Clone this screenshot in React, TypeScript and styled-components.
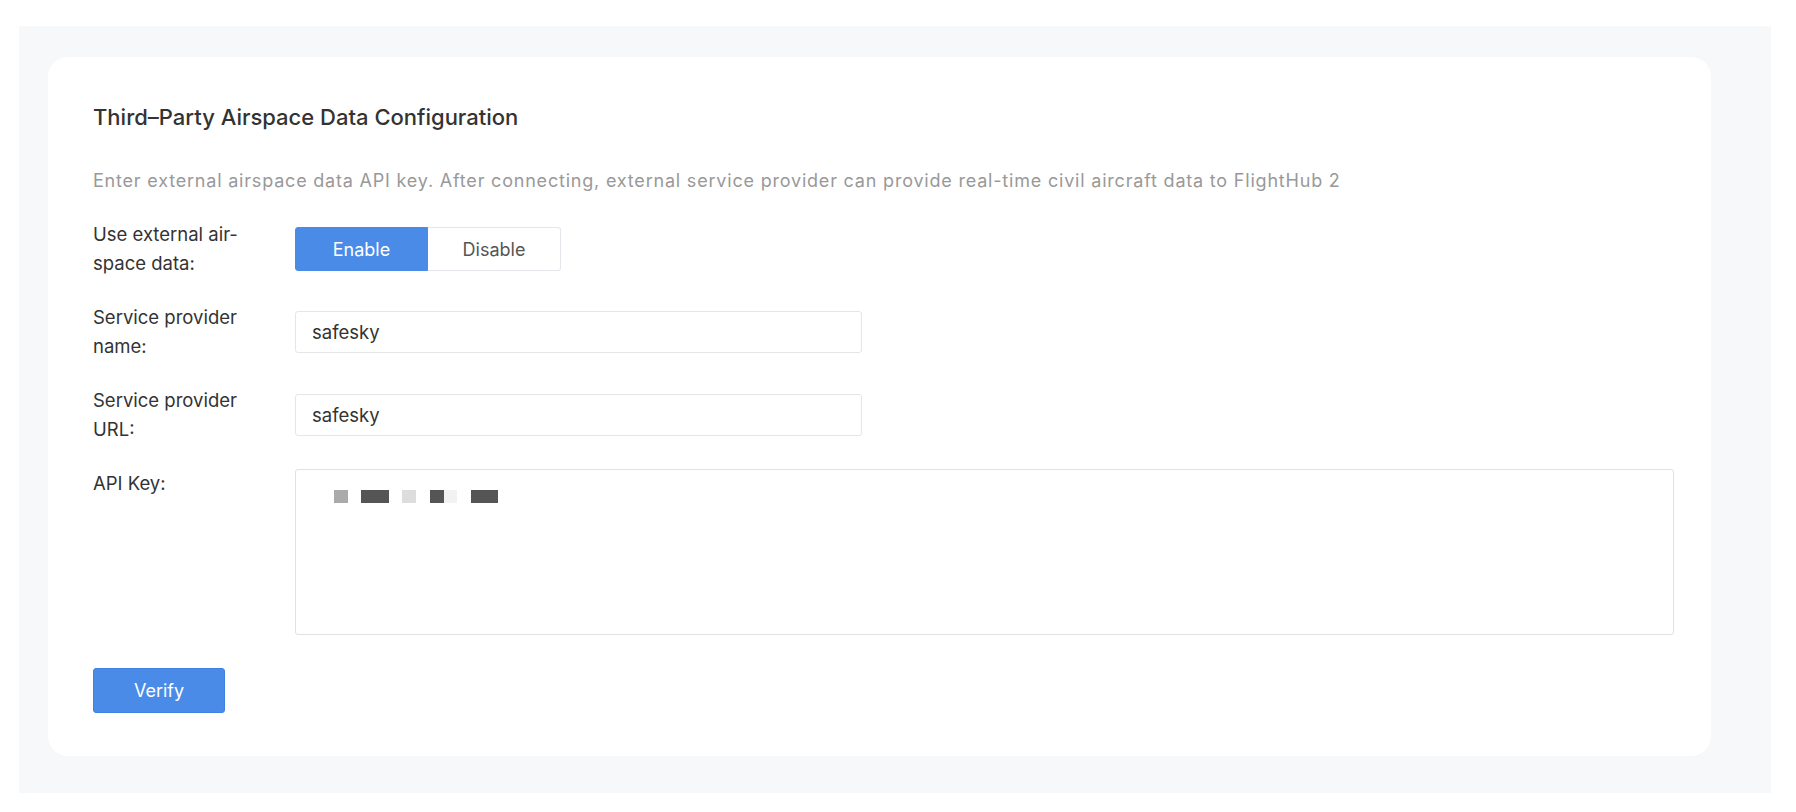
import * as React from 'react';
import styled, { createGlobalStyle } from 'styled-components';

const GlobalStyle = createGlobalStyle`
  html, body {
    margin: 0;
    padding: 0;
    background: #ffffff;
  }
  body {
    font-family: Inter, 'Liberation Sans', 'Noto Sans CJK SC', sans-serif;
    color: #333333;
  }
  * {
    box-sizing: border-box;
  }
`

// mosaic cells that hide the api key in the reference
const keyCells: (string | null)[] = [
  '#aaaaaa', null, '#555555', '#555555', null, '#dddddd', null,
  '#555555', '#f2f2f2', null, '#555555', '#555555',
];

export default function App() {
  const [enabled, setEnabled] = React.useState(true);
  const [name, setName] = React.useState('safesky');
  const [url, setUrl] = React.useState('safesky');

  return (
    <>
      <GlobalStyle />
      <Page>
        <Panel>
          <Card>
            <Title>Third–Party Airspace Data Configuration</Title>
            <Description>
              Enter external airspace data API key. After connecting, external service provider can provide real-time civil aircraft data to FlightHub 2
            </Description>
            <Form>
              <Row>
                <Label>Use external air-<br />space data:</Label>
                <Segmented>
                  <SegButton active={enabled} onClick={() => setEnabled(true)}>Enable</SegButton>
                  <SegButton active={!enabled} onClick={() => setEnabled(false)}>Disable</SegButton>
                </Segmented>
              </Row>
              <Row>
                <Label>Service provider<br />name:</Label>
                <TextInput value={name} onChange={(e) => setName(e.target.value)} />
              </Row>
              <Row>
                <Label>Service provider<br />URL:</Label>
                <TextInput value={url} onChange={(e) => setUrl(e.target.value)} />
              </Row>
              <Row top>
                <Label>API Key:</Label>
                <KeyArea>
                  <Mosaic>
                    {keyCells.map((c, i) => (
                      <Cell key={'cell' + i} tone={c} />
                    ))}
                  </Mosaic>
                </KeyArea>
              </Row>
            </Form>
            <VerifyButton>Verify</VerifyButton>
          </Card>
        </Panel>
      </Page>
    </>
  )
}

const Page = styled.div`
  padding: 26px 25px 20px 19px;
`
const Panel = styled.div`
  background-color: #f7f8fa;
  padding: 31px 60px 37px 29px;
`
const Card = styled.div`
  background-color: #ffffff;
  border-radius: 20px;
  padding: 45px 37px 43px 45px;
  display: flex;
  flex-direction: column;
  align-items: flex-start;
`
const Title = styled.h2`
  margin: 0;
  font-size: 22px;
  line-height: 30px;
  font-weight: 500;
  color: #333333;
`
const Description = styled.p`
  margin: 35px 0 0;
  font-size: 18px;
  line-height: 28px;
  letter-spacing: 0.8px;
  color: #999999;
`
const Form = styled.div`
  width: 100%;
  margin-top: 25px;
  display: flex;
  flex-direction: column;
  gap: 25px;
`
const Row = styled.div<{ top?: boolean }>`
  display: flex;
  align-items: ${(props) => (props.top ? 'flex-start' : 'center')};
`
const Label = styled.div`
  width: 202px;
  flex-shrink: 0;
  font-size: 18.5px;
  line-height: 29px;
  color: #333333;
`
const Segmented = styled.div`
  display: flex;
  height: 44px;
`
const SegButton = styled.button<{ active: boolean }>`
  width: 133px;
  height: 44px;
  font-family: inherit;
  font-size: 18px;
  cursor: pointer;
  border: 1px solid ${(props) => (props.active ? '#4a8be8' : '#e5e6eb')};
  background-color: ${(props) => (props.active ? '#4a8be8' : '#ffffff')};
  color: ${(props) => (props.active ? '#ffffff' : '#555555')};
  &:first-child {
    border-radius: 3px 0 0 3px;
  }
  &:last-child {
    border-radius: 0 3px 3px 0;
    border-left: none;
  }
`
const TextInput = styled.input`
  width: 567px;
  height: 42px;
  padding: 0 16px;
  border: 1px solid #e4e6ea;
  border-radius: 3px;
  font-family: inherit;
  font-size: 18.5px;
  color: #333333;
  outline: none;
  &:focus {
    border-color: #4a8be8;
  }
`
const KeyArea = styled.div`
  flex: 1;
  height: 166px;
  border: 1px solid #e1e1e1;
  border-radius: 3px;
  padding: 20px 0 0 38px;
`
const Mosaic = styled.div`
  display: flex;
`
const Cell = styled.span<{ tone: string | null }>`
  width: 13.7px;
  height: 13px;
  background-color: ${(props) => props.tone ?? 'transparent'};
`
const VerifyButton = styled.button`
  margin-top: 33px;
  width: 132px;
  height: 45px;
  border: 1px solid #3f82e4;
  border-radius: 3px;
  background-color: #4a8be8;
  color: #ffffff;
  font-family: inherit;
  font-size: 18px;
  cursor: pointer;
`
